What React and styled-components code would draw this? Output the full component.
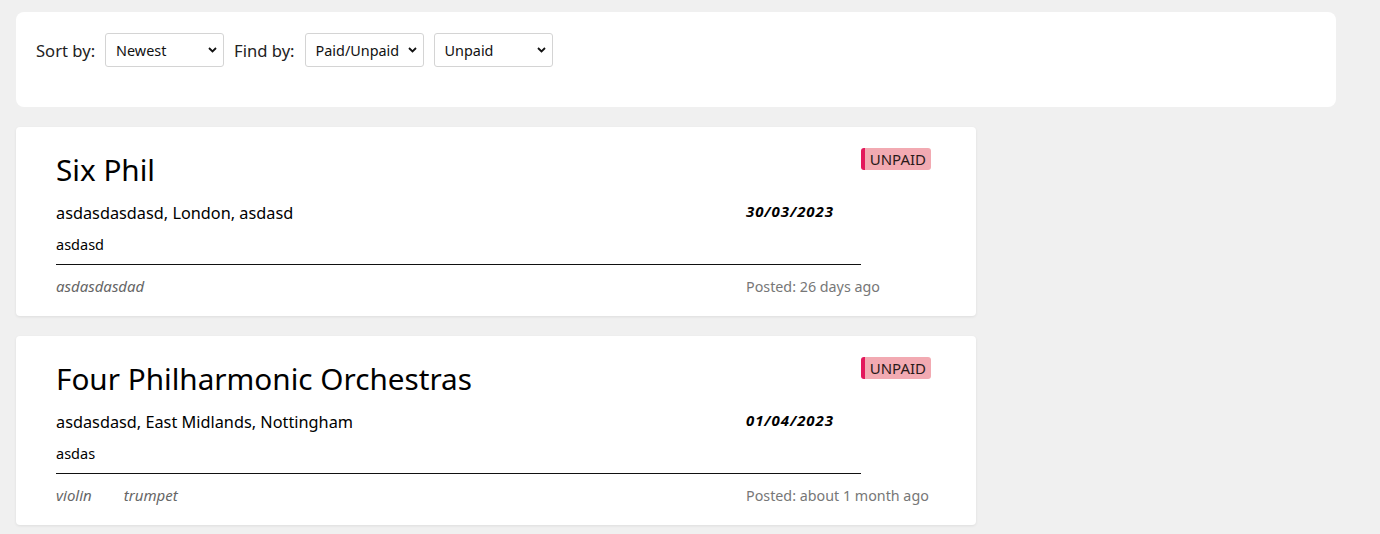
import React from 'react';
import styled, { createGlobalStyle } from 'styled-components';

const GlobalStyle = createGlobalStyle`
  body {
    margin: 0;
    background: #f0f0f0;
    font-family: "Noto Sans", "Open Sans", Arial, sans-serif;
    color: #000;
  }
`;

const Page = styled.div`
  padding: 12px 44px 20px 16px;
  display: flex;
  flex-direction: column;
  gap: 20px;
`;

const FilterPanel = styled.div`
  background: #fff;
  border-radius: 8px;
  padding: 21px 20px 40px;
  display: flex;
  align-items: center;
  gap: 10px;
`;

const Label = styled.span`
  font-size: 16.6px;
  color: #222;
`;

const SelectWrap = styled.div`
  position: relative;
  width: 119px;
  height: 34px;

  svg {
    position: absolute;
    right: 7px;
    top: 14px;
    pointer-events: none;
  }
`;

const Select = styled.select`
  appearance: none;
  width: 100%;
  height: 100%;
  border: 1px solid #d4d4d4;
  border-radius: 3px;
  background: #fff;
  padding: 0 10px;
  font-family: inherit;
  font-size: 14.4px;
  color: #111;
`;

const Chevron = () => (
  <svg width="9" height="6" viewBox="0 0 9 6">
    <path d="M1 1 L4.5 4.5 L8 1" fill="none" stroke="#111" strokeWidth="1.8" />
  </svg>
);

const Card = styled.div`
  position: relative;
  width: 960px;
  background: #fff;
  border-radius: 4px;
  box-shadow: 0 1px 3px rgba(0, 0, 0, 0.08);
  padding: 24px 40px 20px;
  box-sizing: border-box;
`;

const Badge = styled.span`
  position: absolute;
  top: 21px;
  right: 45px;
  height: 22px;
  padding: 0 5px;
  background: #f2aab2;
  border-left: 4px solid #e3185c;
  border-radius: 3px;
  font-size: 15px;
  line-height: 22px;
  color: #2a1a1a;
`;

const Grid = styled.div`
  display: grid;
  grid-template-columns: 690px 1fr;
  align-items: center;
`;

const Title = styled.h2`
  grid-column: 1 / -1;
  margin: 0 0 10px;
  font-size: 29.7px;
  font-weight: 400;
  line-height: 38px;
`;

const Location = styled.div`
  font-size: 16.3px;
  line-height: 28px;
`;

const DateText = styled.div`
  font-size: 15px;
  font-weight: 700;
  font-style: italic;
  letter-spacing: 0.9px;
  margin-top: -4px;
`;

const Description = styled.div`
  font-size: 14.5px;
  line-height: 28px;
  margin: 3px 0 6px;
`;

const Rule = styled.hr`
  width: 805px;
  margin: 0;
  border: none;
  border-top: 1px solid #111;
`;

const Footer = styled(Grid)`
  margin-top: 11px;
  font-size: 14.3px;
  color: #777;
`;

const Tags = styled.div`
  display: flex;
  gap: 32px;
  font-size: 15px;
  font-style: italic;
  color: #666;
`;

const listings = [
  {
    title: 'Six Phil',
    location: 'asdasdasdasd, London, asdasd',
    date: '30/03/2023',
    description: 'asdasd',
    tags: ['asdasdasdad'],
    posted: '26 days ago',
  },
  {
    title: 'Four Philharmonic Orchestras',
    location: 'asdasdasd, East Midlands, Nottingham',
    date: '01/04/2023',
    description: 'asdas',
    tags: ['violin', 'trumpet'],
    posted: 'about 1 month ago',
  },
];

function Dropdown({ value, options }) {
  return (
    <SelectWrap>
      <Select defaultValue={value}>
        {options.map((o) => (
          <option key={o}>{o}</option>
        ))}
      </Select>
      <Chevron />
    </SelectWrap>
  );
}

export default function App() {
  return (
    <>
      <GlobalStyle />
      <Page>
        <FilterPanel>
          <Label>Sort by:</Label>
          <Dropdown value="Newest" options={['Newest', 'Oldest']} />
          <Label>Find by:</Label>
          <Dropdown value="Paid/Unpaid" options={['Paid/Unpaid', 'Location']} />
          <Dropdown value="Unpaid" options={['Unpaid', 'Paid']} />
        </FilterPanel>

        {listings.map((l) => (
          <Card key={l.title}>
            <Badge>UNPAID</Badge>
            <Grid>
              <Title>{l.title}</Title>
              <Location>{l.location}</Location>
              <DateText>{l.date}</DateText>
            </Grid>
            <Description>{l.description}</Description>
            <Rule />
            <Footer>
              <Tags>
                {l.tags.map((t) => (
                  <span key={t}>{t}</span>
                ))}
              </Tags>
              <span>Posted: {l.posted}</span>
            </Footer>
          </Card>
        ))}
      </Page>
    </>
  );
}
